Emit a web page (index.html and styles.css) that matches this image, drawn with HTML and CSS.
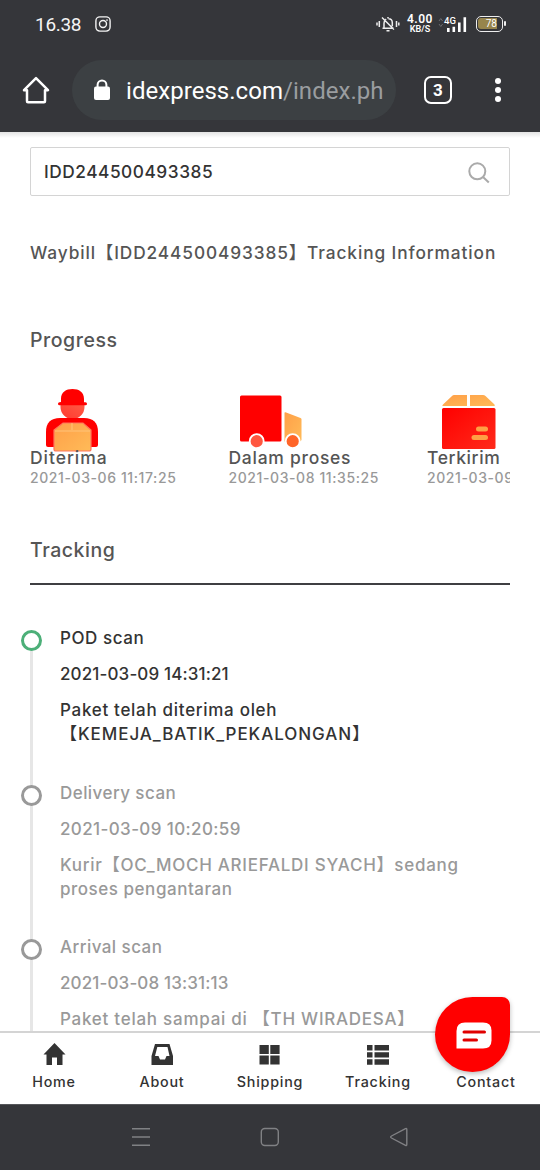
FILE: index.html
```html
<!DOCTYPE html>
<html lang="id">
<head>
<meta charset="utf-8">
<title>Tracking</title>
<link rel="stylesheet" href="styles.css">
</head>
<body>
<div class="phone">
  <header class="status">
    <span class="clock">16.38</span>
    <svg class="insta" width="16" height="16" viewBox="0 0 16 16" fill="none" stroke="#f4f4f4" stroke-width="1.4"><rect x=".9" y=".9" width="14.2" height="14.2" rx="4"/><circle cx="8" cy="8" r="3.5"/><circle cx="12" cy="4.1" r=".5" fill="#f4f4f4" stroke-width=".7"/></svg>
    <div class="status-right">
      <svg class="bell" width="24" height="18" viewBox="0 0 24 18" fill="none" stroke="#eee" stroke-width="1.5"><path d="M1 7.500v3M3.300 6v6M20.500 6v6M22.800 7.500v3M6.500 13.200h11.200M8 13V8.200c0-2 .9-3.300 2.200-4M12 2v1.500M12.500 3.700c2.300 0 3.800 1.500 3.800 4v3.500M6 2.500l12 12M10.500 15.700h3"/></svg>
      <span class="speed"><b>4.00</b><small>KB/S</small></span>
      <svg class="signal" width="29" height="17" viewBox="0 0 29 17"><path d="m1 5 1.800-2.500L4.600 5M1 8l1.800 2.500L4.600 8" fill="none" stroke="#6b6c70"/><text x="6" y="8.300" class="net">4G</text><path d="M9 12h2.600v4H9zM14.500 10.800h2.600V16h-2.600zM20 6.500h2.600V16H20zM25.500 1.200h2.600V16h-2.600z" fill="#fff"/></svg>
      <span class="battery"><span class="level">78</span></span>
    </div>
  </header>
  <nav class="toolbar">
    <svg class="home" width="28" height="28" viewBox="0 0 28 28" fill="none" stroke="#fff" stroke-width="2.500" stroke-linejoin="round" stroke-linecap="round"><path d="M2 14.200 14 2.200l12 12h-3V25.300q0 1-1 1H6q-1 0-1-1V14.200z"/></svg>
    <div class="url">
      <svg width="16" height="22" viewBox="0 0 16 22"><path d="M3.600 9V5.800a4.400 4.400 0 0 1 8.800 0V9" fill="none" stroke="#fff" stroke-width="2"/><rect y="7.500" width="16" height="13.500" rx="2" fill="#fff"/></svg>
      <span class="address">idexpress.com<i>/index.ph</i></span>
    </div>
    <span class="tabs">3</span>
    <span class="dots"><i></i><i></i><i></i></span>
  </nav>
  <main class="page">
    <div class="search"><span class="t-code">IDD244500493385</span>
      <svg width="22" height="22" viewBox="0 0 22 22" fill="none" stroke="#aaa" stroke-width="2"><circle cx="9.300" cy="9.300" r="8"/><path d="m15 15 5.800 5.500"/></svg>
    </div>
    <h1 class="waybill">Waybill【IDD244500493385】Tracking Information</h1>
    <h2 class="progress-title">Progress</h2>
    <section class="steps">
      <div class="step">
        <svg width="84" height="64" viewBox="0 0 84 64"><defs><linearGradient id="box" x2="1" y2="1"><stop stop-color="#ff9f48"/><stop offset="1" stop-color="#ffbb58"/></linearGradient><linearGradient id="face" x1="1" x2="0" y2="1"><stop stop-color="#ff5b45"/><stop offset="1" stop-color="#ff3a30"/></linearGradient><linearGradient id="red" x2="1" y2="1"><stop stop-color="#f00"/><stop offset="1" stop-color="#ff2a1a"/></linearGradient></defs>
        <path d="M30.500 16h24v3a12 12 0 0 1-24 0z" fill="url(#face)"/><path d="M31 14V11C31 4 36 1 42.500 1S54 4 54 11v3.300h1.500q1.500 0 1.500 1.500t-1.500 1.500h-26q-1.500 0-1.500-1.500t1.500-1.500z" fill="red"/><path d="M30 30h24q14 0 14 14v13q0 2-2 2H18q-2 0-2-2V44q0-14 14-14z" fill="red"/><path d="M33 35h20l8 7v19q0 2-2 2H26q-2 0-2-2V42z" fill="url(#box)" stroke="#ff755a" stroke-width="1.200"/><path d="M25 43h35M42 35v7" stroke="#ffc47a" fill="none"/></svg>
        <b class="t-dit">Diterima</b><small>2021-03-06 11:17:25</small>
      </div>
      <div class="step">
        <svg width="84" height="64" viewBox="0 0 84 64"><rect x="11" y="7.500" width="41.500" height="46" rx="1.500" fill="red"/><path d="M55.500 25q0-1 1-.7l15 5.700q1 .4 1 1.500v20q0 2-2 2h-15z" fill="url(#box)"/><g stroke="#fff" stroke-width="1.800"><circle cx="27.700" cy="53.200" r="7" fill="#ff5740"/><circle cx="63.700" cy="53.200" r="7" fill="#ff6528"/></g></svg>
        <b class="t-dal">Dalam proses</b><small>2021-03-08 11:35:25</small>
      </div>
      <div class="step">
        <svg width="84" height="64" viewBox="0 0 84 64"><path d="M40 7v11H16.500q-2 0-.5-1.500L25 8q1-1 2-1zM43 7h13q1.500 0 2.500 1l9 8.500q1 1.500-.5 1.500H43z" fill="url(#box)"/><rect x="15" y="20" width="53.500" height="41" rx="1.500" fill="url(#red)"/><rect x="49" y="38.500" width="12" height="5" rx="2.500" fill="#ffa044"/><rect x="44.500" y="47" width="16.500" height="5" rx="2.500" fill="#ffa044"/></svg>
        <b class="t-ter">Terkirim</b><small>2021-03-09 14:31:21</small>
      </div>
    </section>
    <h2 class="tracking-title">Tracking</h2>
    <ol class="timeline">
      <li class="scan current"><p class="t-pod">POD scan</p><p class="t-d1">2021-03-09 14:31:21</p><p><span class="t-p1">Paket telah diterima oleh</span><br><span class="t-p2">【KEMEJA_BATIK_PEKALONGAN】</span></p></li>
      <li class="scan"><p class="t-del">Delivery scan</p><p class="t-d2">2021-03-09 10:20:59</p><p><span class="t-k1">Kurir【OC_MOCH ARIEFALDI SYACH】sedang</span><br><span class="t-k2">proses pengantaran</span></p></li>
      <li class="scan"><p class="t-arr">Arrival scan</p><p class="t-d3">2021-03-08 13:31:13</p><p><span class="t-p3">Paket telah sampai di 【TH WIRADESA】</span></p></li>
    </ol>
    <footer class="tabbar">
      <a><svg width="24" height="24" viewBox="0 0 24 24"><path d="M12.500 1 1.500 12.500h3V23H10v-7.500h5V23h5.500V12.500h3z"/></svg><span>Home</span></a>
      <a><svg width="24" height="24" viewBox="0 0 24 24"><path fill-rule="evenodd" d="M5 2h14.500L23 14v9H1.500v-9zM7.300 5 5 14h3.500l1.500 3.500h5l1.500-3.500h3L17.500 5z"/></svg><span>About</span></a>
      <a><svg width="24" height="24" viewBox="0 0 24 24"><path d="M1.500 3h9.300v9H1.500zM12.300 3h9.300v9h-9.300zM1.500 13.500h9.300v9H1.500zM12.300 13.500h9.300v9h-9.300z"/></svg><span>Shipping</span></a>
      <a><svg width="24" height="24" viewBox="0 0 24 24"><path d="M1 3h5.500v5.500H1zM8.500 3H23v5.500H8.500zM1 10.200h5.500v5.300H1zM8.500 10.200H23v5.300H8.500zM1 17.200h5.500v5.500H1zM8.500 17.200H23v5.500H8.500z"/></svg><span>Tracking</span></a>
      <a><svg width="24" height="24" viewBox="0 0 24 24"><path d="M2 3h20v18.500H2z"/></svg><span>Contact</span></a>
    </footer>
    <div class="chat"><svg width="36" height="27" viewBox="0 0 36 27"><path d="M9 .5h18q8.500 0 8.500 8v10q0 8-8.500 8H.5V9Q.5.500 9 .5z" fill="#fff"/><path d="M8 10h20.500M8 18h12.500" stroke="#e00000" stroke-width="3" stroke-linecap="round"/></svg></div>
  </main>
  <nav class="android">
    <svg width="20" height="20" viewBox="0 0 20 20"><path d="M1 1.800h18M1 10h18M1 18.200h18"/></svg>
    <svg width="20" height="20" viewBox="0 0 20 20"><rect x="1.300" y="1.500" width="17" height="17" rx="3.500"/></svg>
    <svg width="20" height="20" viewBox="0 0 20 20"><path d="M17.800 2.500v15q0 1.500-1.300.8L2.500 11q-1.700-1 0-2l14-7.300q1.300-.7 1.300.8z"/></svg>
  </nav>
</div>
</body>
</html>
```
FILE: styles.css
```css
*, *::before, *::after { box-sizing: border-box; margin: 0; padding: 0; }
body { font-family: Inter, "Noto Sans CJK SC", sans-serif; font-weight: 500; background: #fff; }
svg { display: block; flex: none; }
.phone { width: 540px; height: 1170px; display: flex; flex-direction: column; overflow: hidden; }

.status { height: 48px; background: #35363a; display: flex; align-items: center; padding: 0 34px 0 35px; color: #f4f4f4; }
.clock { font: 400 19px Roboto, sans-serif; letter-spacing: -.3px; width: 60px; }
.status-right { margin-left: auto; display: flex; align-items: center; }
.speed { display: flex; flex-direction: column; align-items: center; width: 28px; margin-left: 6px; color: #fff; font-family: Roboto, sans-serif; }
.speed b { font-size: 12px; line-height: 11px; font-weight: 600; letter-spacing: .5px; }
.speed small { font-size: 9px; line-height: 9px; font-weight: 600; }
.signal { margin-left: 4px; }
.net { font: 500 9.5px Roboto, sans-serif; fill: #fff; }
.battery { width: 27px; height: 16px; border: 1.6px solid #eee; border-radius: 5px; margin: 0 3px 0 9px; padding: 1px; position: relative; }
.battery::after { content: ""; position: absolute; right: -4px; top: 4px; width: 2px; height: 5px; background: #eee; border-radius: 1px; }
.level { display: block; width: 19px; height: 11px; background: #97854c; border-radius: 3px 0 0 3px; font: 10px/11px Roboto, sans-serif; text-align: right; color: #fff; }

.toolbar { height: 84px; background: #35363a; display: flex; align-items: center; padding: 0 32px 0 22px; }
.url { margin-left: 22px; width: 324px; height: 60px; border-radius: 30px; background: #3c4043; display: flex; align-items: center; padding-left: 22px; }
.address { margin: 2px 0 0 16px; font: 400 24px Roboto, sans-serif; color: #fff; white-space: nowrap; letter-spacing: .04px; }
.address i { font-style: normal; color: #9a9da0; }
.tabs { margin-left: 28px; width: 28px; height: 28px; border: 2.5px solid #fff; border-radius: 7px; color: #fff; font: 700 17px/24px Roboto, sans-serif; text-align: center; }
.dots { margin-left: auto; margin-right: 7px; display: flex; flex-direction: column; gap: 3px; }
.dots i { width: 6px; height: 6px; border-radius: 50%; background: #fff; }

.page { position: relative; height: 972px; overflow: hidden; padding: 15px 30px 0; background: linear-gradient(#e3e3e3, #fff 6px); }
.search { height: 49px; border: 1px solid #d4d4d4; border-radius: 2px; display: flex; align-items: center; justify-content: space-between; padding: 0 19px 0 13px; font-size: 17.3px; color: #333; }
.search svg { margin-top: 3px; }
.t-code { letter-spacing: .53px; }
h1, h2 { font-weight: 500; color: #555; white-space: nowrap; }
.waybill { margin-top: 45px; font-size: 17.3px; line-height: 24px; letter-spacing: .9px; }
.progress-title { margin-top: 61px; font-size: 19.5px; line-height: 28px; letter-spacing: .55px; }
.steps { margin-top: 34px; display: flex; overflow: hidden; height: 100px; }
.step { flex: 0 0 198.5px; display: flex; flex-direction: column; align-items: flex-start; white-space: nowrap; }
.step b { font-size: 17.5px; line-height: 18px; margin-top: -3px; font-weight: 500; color: #555; }
.step small { font-size: 14px; line-height: 21px; color: #999; letter-spacing: .59px; }
.step .t-dit { letter-spacing: .95px; }
.step .t-dal { letter-spacing: .72px; }
.step .t-ter { letter-spacing: .6px; }
.tracking-title { margin-top: 48px; height: 49px; border-bottom: 2px solid #3f3f42; font-size: 19.5px; line-height: 28px; letter-spacing: .55px; }

.timeline { list-style: none; padding: 41px 0 0 30px; }
.scan { position: relative; height: 154.5px; font-size: 17px; color: #999; white-space: nowrap; }
.scan p { line-height: 24px; margin-bottom: 12px; }
.scan::before { content: ""; position: absolute; left: -30px; top: 14px; width: 3px; height: 155px; background: #e6e6e6; }
.scan::after { content: ""; position: absolute; left: -39px; top: 4px; width: 21px; height: 21px; border: 3px solid #999; border-radius: 50%; background: #fff; z-index: 1; }
.current { color: #333; }
.current::after { border-color: #4caf78; }
.t-pod { letter-spacing: .58px; }
.t-d1 { letter-spacing: .13px; }
.t-p1 { letter-spacing: .7px; }
.t-p2 { letter-spacing: .95px; }
.t-del, .t-arr { letter-spacing: .44px; }
.t-d2 { letter-spacing: .38px; }
.t-k1 { letter-spacing: .74px; }
.t-k2 { letter-spacing: .53px; }
.t-d3 { letter-spacing: .13px; }
.t-p3 { letter-spacing: .74px; }

.tabbar { position: absolute; left: 0; right: 0; bottom: 0; height: 73px; z-index: 2; background: #fff; border-top: 2px solid #d4d4d4; display: flex; color: #333; }
.tabbar a { flex: 1; display: flex; flex-direction: column; align-items: center; padding-top: 9px; font-size: 14.3px; line-height: 18px; letter-spacing: .8px; }
.tabbar svg { fill: #333; margin-bottom: 7px; }
.chat { position: absolute; z-index: 3; left: 435px; top: 865px; width: 75px; height: 75px; border-radius: 50% 8px 50% 50%; background: #f00; box-shadow: 0 2px 5px #0004; display: flex; align-items: center; justify-content: center; padding: 1px 0 0 3px; }

.android { height: 66px; background: #35363a; border-top: 1px solid #55565a; display: flex; align-items: center; padding: 0 0 2px 131px; gap: 109px; }
.android svg { fill: none; stroke: #808184; stroke-width: 1.4; }
```
